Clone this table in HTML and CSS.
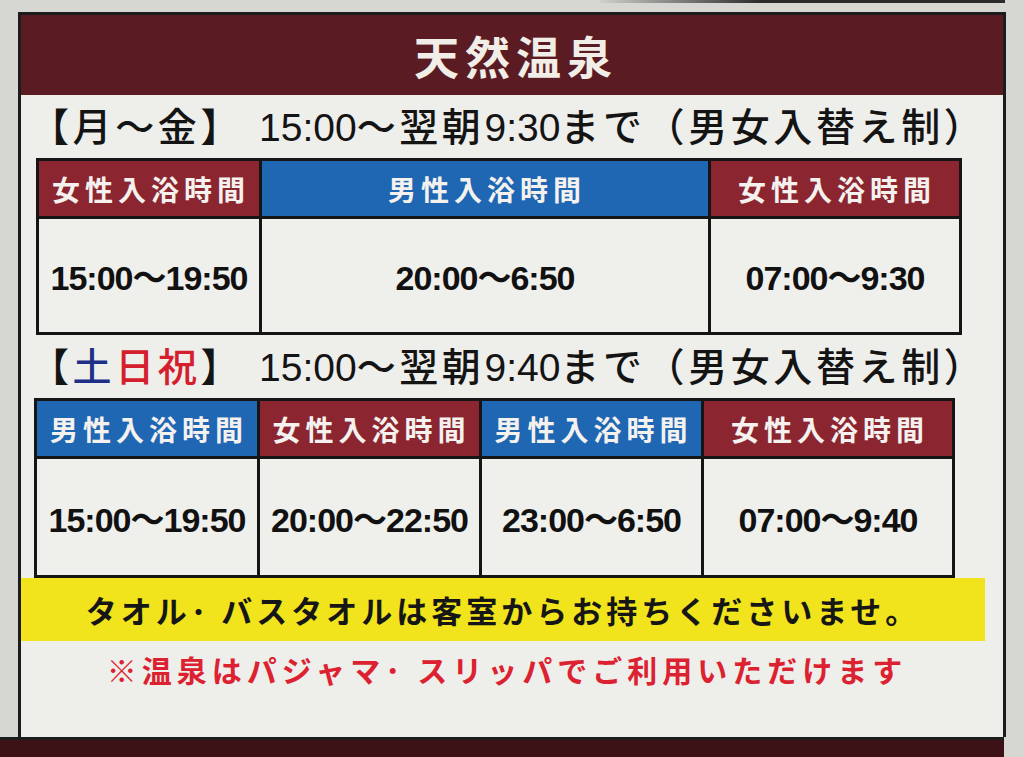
FILE: index.html
```html
<!DOCTYPE html>
<html lang="ja">
<head>
<meta charset="utf-8">
<title>天然温泉</title>
<link rel="stylesheet" href="styles.css">
</head>
<body>
<div class="topline"></div>
<div class="sign">
  <div class="title">天然温泉</div>
  <div class="days">【月～金】<span class="num start">15:00</span>～翌朝<span class="num">9:30</span>まで（男女入替え制）</div>
  <div class="table t1">
    <div class="hd f">女性入浴時間</div>
    <div class="hd m">男性入浴時間</div>
    <div class="hd f">女性入浴時間</div>
    <div class="cell">15:00～19:50</div>
    <div class="cell">20:00～6:50</div>
    <div class="cell">07:00～9:30</div>
  </div>
  <div class="days">【<span class="blue">土</span><span class="red">日祝</span>】<span class="num start">15:00</span>～翌朝<span class="num">9:40</span>まで（男女入替え制）</div>
  <div class="table t2">
    <div class="hd m">男性入浴時間</div>
    <div class="hd f">女性入浴時間</div>
    <div class="hd m">男性入浴時間</div>
    <div class="hd f">女性入浴時間</div>
    <div class="cell">15:00～19:50</div>
    <div class="cell">20:00～22:50</div>
    <div class="cell">23:00～6:50</div>
    <div class="cell">07:00～9:40</div>
  </div>
  <div class="towel">タオル･ バスタオルは客室からお持ちくださいませ。</div>
  <div class="note">※温泉はパジャマ･ スリッパでご利用いただけます</div>
</div>
<div class="bottom"></div>
</body>
</html>
```
FILE: styles.css
```css
html, body {
  margin: 0;
  padding: 0;
}
body {
  width: 1024px;
  height: 757px;
  overflow: hidden;
  background: #d6d6d2;
  font-family: "Noto Sans CJK JP", "Noto Sans", sans-serif;
  position: relative;
}
.topline {
  height: 3px;
  margin-left: 600px;
  width: 405px;
  background: linear-gradient(to right, #cfcfcb, #2a2a2a 40%);
}
.sign {
  margin: 9px 0 0 18px;
  width: 982px;
  height: 722px;
  border: 3px solid #1c1c1c;
  border-bottom: none;
  background: #eeeeeb;
  display: flex;
  flex-direction: column;
}
.title {
  height: 80px;
  background: #5a1c22;
  color: #f1ede7;
  font-size: 45px;
  font-weight: 700;
  letter-spacing: 6px;
  display: flex;
  align-items: center;
  justify-content: center;
  padding-left: 8px;
}
.days {
  height: 63px;
  line-height: 66px;
  padding-left: 9px;
  font-family: "Liberation Sans", "Noto Sans CJK JP", sans-serif;
  font-size: 39px;
  font-weight: 500;
  letter-spacing: 3.6px;
  color: #141414;
  white-space: nowrap;
}
.days .num {
  letter-spacing: 0;
}
.days .start {
  margin-left: 16px;
}
.blue { color: #1d2f86; }
.red { color: #d4202c; }
.table {
  display: grid;
  background: #151515;
  gap: 3px;
  padding: 3px;
  width: max-content;
}
.t1 {
  margin-left: 15px;
  grid-template-columns: 220px 446px 248px;
  grid-template-rows: 55px 113px;
}
.t2 {
  margin-left: 13px;
  grid-template-columns: 220px 219px 219px 248px;
  grid-template-rows: 55px 116px;
}
.hd {
  color: #f4f1ee;
  font-size: 28px;
  font-weight: 700;
  letter-spacing: 5px;
  padding-left: 4px;
  display: flex;
  align-items: center;
  justify-content: center;
  white-space: nowrap;
}
.hd.f { background: #8b2631; }
.hd.m { background: #1f66b3; }
.cell {
  background: #efefec;
  color: #111;
  font-family: "Liberation Sans", "Noto Sans CJK JP", sans-serif;
  font-size: 34px;
  font-weight: 700;
  letter-spacing: -1px;
  display: flex;
  align-items: center;
  justify-content: center;
  white-space: nowrap;
}
.towel {
  margin-right: 18px;
  height: 63px;
  background: #f1e41c;
  color: #161616;
  font-size: 31px;
  font-weight: 700;
  letter-spacing: 4px;
  display: flex;
  align-items: center;
  justify-content: center;
  white-space: nowrap;
}
.note {
  height: 56px;
  color: #dc2230;
  font-size: 30px;
  font-weight: 700;
  letter-spacing: 5px;
  display: flex;
  align-items: center;
  justify-content: center;
  padding-right: 10px;
  white-space: nowrap;
}
.bottom {
  position: absolute;
  left: 0;
  right: 20px;
  bottom: 0;
  height: 17px;
  background: #3c1216;
  border-top: 3px solid #1c1c1c;
}
```
